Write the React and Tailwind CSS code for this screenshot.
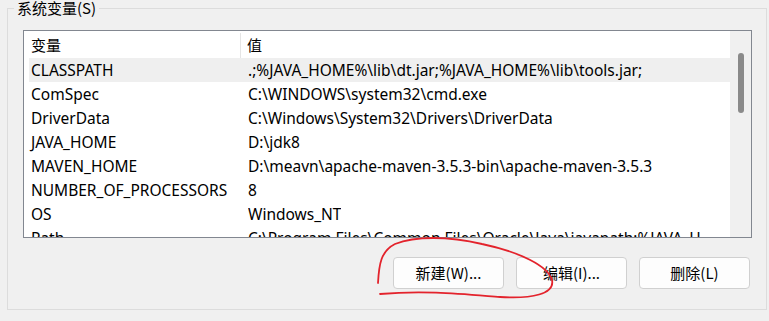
import React from 'react';

const rows = [
  ['CLASSPATH', '.;%JAVA_HOME%\\lib\\dt.jar;%JAVA_HOME%\\lib\\tools.jar;'],
  ['ComSpec', 'C:\\WINDOWS\\system32\\cmd.exe'],
  ['DriverData', 'C:\\Windows\\System32\\Drivers\\DriverData'],
  ['JAVA_HOME', 'D:\\jdk8'],
  ['MAVEN_HOME', 'D:\\meavn\\apache-maven-3.5.3-bin\\apache-maven-3.5.3'],
  ['NUMBER_OF_PROCESSORS', '8'],
  ['OS', 'Windows_NT'],
  ['Path', 'C:\\Program Files\\Common Files\\Oracle\\Java\\javapath;%JAVA_H'],
];

const buttons = ['新建(W)...', '编辑(I)...', '删除(L)'];

export default function App() {
  return (
    <div className="relative w-[769px] h-[321px] overflow-hidden bg-[#f0f0f0] text-black font-['Noto_Sans','Noto_Sans_CJK_SC',sans-serif]">
      <fieldset className="ml-[7px] w-[760px] h-[310px] border border-[#dcdcdc]">
        <legend className="ml-[6px] px-[3px] text-[15px] leading-[16px] font-['Noto_Sans_CJK_SC',sans-serif]">
          系统变量(S)
        </legend>

        {/* list view */}
        <div className="ml-[15px] mt-[14px] w-[729px] h-[208px] border border-[#828790] bg-white flex overflow-hidden">
          <div className="flex-1 flex flex-col overflow-hidden">
            <div className="h-[27px] shrink-0 flex pt-[2px] text-[15px]">
              <div className="w-[217px] shrink-0 pl-[7px] flex items-center border-r border-[#e5e5e5] font-['Noto_Sans_CJK_SC',sans-serif]">变量</div>
              <div className="pl-[6px] flex items-center font-['Noto_Sans_CJK_SC',sans-serif]">值</div>
            </div>
            {rows.map(([name, value], i) => (
              <div
                key={name}
                className={`ml-[5px] h-[24px] shrink-0 flex items-center pt-[2px] text-[15.5px] whitespace-nowrap ${i === 0 ? 'bg-[#efefef]' : ''}`}
              >
                <div className="w-[219px] shrink-0 pl-[2px]">{name}</div>
                <div className="overflow-hidden">{value}</div>
              </div>
            ))}
          </div>
          {/* scrollbar */}
          <div className="w-[21px] shrink-0 bg-[#f0f0f0] pt-[22px] flex justify-center">
            <div className="w-[6px] h-[60px] rounded-full bg-[#8a8a8a]"></div>
          </div>
        </div>

        <div className="mt-[19px] pr-[16px] flex justify-end gap-[12px]">
          {buttons.map((b) => (
            <button
              key={b}
              className="w-[111px] h-[32px] rounded-[4px] border border-[#d0d0d0] bg-[#fdfdfd] text-[15px] font-['Noto_Sans_CJK_SC',sans-serif]"
            >
              {b}
            </button>
          ))}
        </div>
      </fieldset>

      {/* hand-drawn annotation */}
      <svg className="absolute left-0 top-0 pointer-events-none" width="769" height="321">
        <path
          d="M378,283 C379,264 381,251 395,244 C415,236 448,236 482,244 C520,252 548,266 552,280 C555,294 532,299 500,297 C462,294 424,290 380,294"
          fill="none"
          stroke="#e3232c"
          strokeWidth="1.8"
          strokeLinecap="round"
        />
      </svg>
    </div>
  );
}
